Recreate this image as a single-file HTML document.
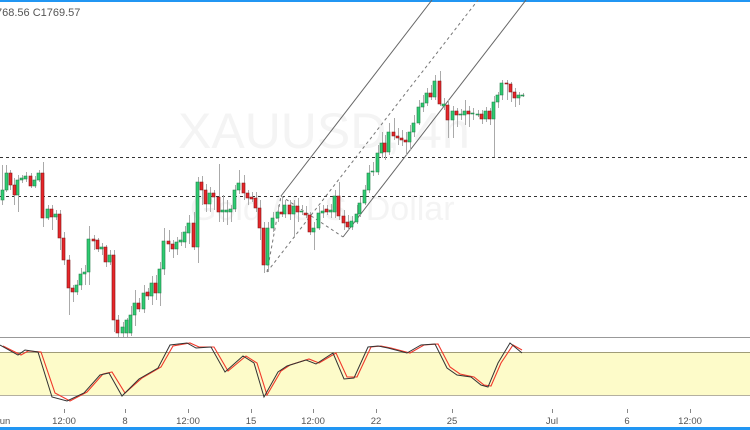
<!DOCTYPE html>
<html><head><meta charset="utf-8"><style>
html,body{margin:0;padding:0;background:#fff;width:750px;height:430px;overflow:hidden;font-family:"Liberation Sans",sans-serif}
</style></head><body>
<svg width="750" height="430" viewBox="0 0 750 430" xmlns="http://www.w3.org/2000/svg" style="position:absolute;left:0;top:0">
<rect x="0" y="0" width="750" height="2" fill="#2196f3"/>
<rect x="0" y="427" width="750" height="3" fill="#2196f3"/>
<text x="-4" y="16" font-size="11" fill="#555" font-family="Liberation Sans,sans-serif">768.56  C1769.57</text>
<text x="178" y="148" font-size="50" fill="#f4f4f4" font-family="Liberation Sans,sans-serif">XAUUSD, 4h</text>
<text x="190" y="220" font-size="34" fill="#f4f4f4" font-family="Liberation Sans,sans-serif">Gold / U.S. Dollar</text>
<g stroke="#333" stroke-width="1" stroke-dasharray="3,3">
<line x1="0" y1="157.5" x2="750" y2="157.5"/>
<line x1="0" y1="196.5" x2="750" y2="196.5"/>
</g>
<g stroke="#666" stroke-width="1" fill="none">
<line x1="281" y1="196" x2="432" y2="0"/>
<line x1="343" y1="237" x2="526" y2="0"/>
</g>
<g stroke="#777" stroke-width="1" stroke-dasharray="3,3" fill="none">
<line x1="267" y1="272" x2="478" y2="0"/>
<line x1="281" y1="196" x2="343" y2="237"/>
<line x1="267" y1="272" x2="281" y2="196"/>
</g>
<path stroke="#aaa" stroke-width="1" fill="none" d="M2.5 165V205M6.5 165V192M10.5 170V190M14.5 178V205M18.5 175V212M22.5 175V183M26.5 172V182M31.5 173V188M35.5 176V188M39.5 170V182M43.5 162V227M48.5 205V220M52.5 205V230M56.5 210V220M60.5 210V250M64.5 232V265M69.5 255V315M73.5 285V302M77.5 280V295M81.5 268V290M85.5 265V285M89.5 226V285M94.5 235V250M98.5 238V252M102.5 243V255M106.5 245V267M110.5 250V265M114.5 250V332M118.5 315V337M123.5 322V337M127.5 318V337M131.5 306V336M135.5 290V326M139.5 298V312M144.5 285V313M148.5 288V300M152.5 276V305M156.5 275V300M160.5 262V306M164.5 228V275M169.5 230V252M173.5 240V258M177.5 237V255M181.5 232V246M185.5 226V248M189.5 215V244M194.5 212V250M198.5 177V263M202.5 176V205M206.5 184V212M210.5 187V212M214.5 190V210M219.5 164V222M223.5 195V222M227.5 200V225M231.5 205V222M235.5 185V212M239.5 170V194M244.5 175V200M248.5 190V205M252.5 192V202M256.5 192V212M260.5 200V240M264.5 222V273M268.5 222V272M273.5 212V232M278.5 205V222M282.5 196V217M285.5 200V218M290.5 200V220M294.5 200V238M298.5 198V222M302.5 205V215M306.5 206V218M310.5 212V235M314.5 222V250M319.5 206V230M323.5 205V218M327.5 205V215M331.5 204V218M335.5 190V218M339.5 182V220M344.5 210V230M348.5 215V230M352.5 216V230M357.5 205V224M360.5 197V217M365.5 185V205M369.5 165V193M373.5 162V176M378.5 145V175M382.5 132V158M385.5 135V160M389.5 123V155M394.5 118V140M398.5 128V145M402.5 130V146M406.5 132V155M410.5 125V150M414.5 115V137M419.5 100V125M423.5 95V112M427.5 88V106M431.5 85V100M435.5 75V100M440.5 71V106M444.5 98V110M448.5 100V138M453.5 106V138M457.5 108V127M461.5 109V120M465.5 100V125M469.5 106V127M473.5 108V120M478.5 110V117M482.5 110V124M486.5 107V122M490.5 108V125M494.5 96V157M498.5 92V108M502.5 80V100M507.5 80V100M511.5 82V102M515.5 88V107M519.5 92V105M523.5 93V97"/>
<path fill="#2ecc71" stroke="#1e7a45" stroke-width="0.6" d="M1 190h3V200h-3ZM5 173h3V190h-3ZM16 180h3V195h-3ZM20 178h3V180h-3ZM24 176h3V179h-3ZM33 180h3V186h-3ZM37 173h3V180h-3ZM46 209h3V218h-3ZM54 214h3V217h-3ZM75 285h3V292h-3ZM79 274h3V285h-3ZM83 272h3V274h-3ZM87 239h3V272h-3ZM100 247h3V249h-3ZM108 255h3V262h-3ZM121 327h3V333h-3ZM125 320h3V333h-3ZM129 315h3V333h-3ZM133 303h3V315h-3ZM142 293h3V309h-3ZM150 283h3V296h-3ZM158 269h3V293h-3ZM162 241h3V269h-3ZM175 242h3V249h-3ZM179 240h3V242h-3ZM183 232h3V242h-3ZM187 223h3V233h-3ZM196 182h3V247h-3ZM208 193h3V204h-3ZM221 210h3V212h-3ZM225 210h3V212h-3ZM229 209h3V212h-3ZM233 190h3V209h-3ZM237 183h3V190h-3ZM266 228h3V265h-3ZM271 218h3V228h-3ZM276 212h3V218h-3ZM283 205h3V214h-3ZM292 206h3V214h-3ZM300 211h3V212h-3ZM312 228h3V232h-3ZM317 213h3V228h-3ZM321 211h3V213h-3ZM329 210h3V212h-3ZM333 196h3V212h-3ZM350 221h3V227h-3ZM355 214h3V222h-3ZM358 203h3V214h-3ZM363 190h3V203h-3ZM367 173h3V190h-3ZM371 171h3V172h-3ZM376 153h3V172h-3ZM380 143h3V153h-3ZM387 132h3V152h-3ZM408 132h3V142h-3ZM412 123h3V132h-3ZM417 107h3V123h-3ZM421 103h3V107h-3ZM425 93h3V103h-3ZM433 81h3V97h-3ZM442 104h3V106h-3ZM451 111h3V120h-3ZM459 114h3V115h-3ZM463 111h3V115h-3ZM471 113h3V114h-3ZM476 114h3V115h-3ZM484 111h3V119h-3ZM492 102h3V119h-3ZM496 95h3V102h-3ZM500 83h3V95h-3ZM517 95h3V98h-3ZM521 95h3V96h-3Z"/>
<path fill="#e8262a" stroke="#7a1515" stroke-width="0.6" d="M9 173h3V185h-3ZM13 185h3V195h-3ZM29 176h3V186h-3ZM41 173h3V218h-3ZM50 209h3V217h-3ZM58 214h3V238h-3ZM62 238h3V260h-3ZM67 260h3V288h-3ZM71 288h3V292h-3ZM92 239h3V241h-3ZM96 240h3V249h-3ZM104 247h3V262h-3ZM112 255h3V320h-3ZM116 320h3V333h-3ZM137 303h3V309h-3ZM146 292h3V296h-3ZM154 283h3V293h-3ZM167 241h3V244h-3ZM171 244h3V249h-3ZM192 223h3V247h-3ZM200 182h3V190h-3ZM204 190h3V204h-3ZM212 193h3V197h-3ZM217 197h3V212h-3ZM242 183h3V193h-3ZM246 193h3V198h-3ZM250 197h3V199h-3ZM254 198h3V208h-3ZM258 208h3V228h-3ZM262 228h3V265h-3ZM280 212h3V214h-3ZM288 205h3V214h-3ZM296 206h3V212h-3ZM304 213h3V215h-3ZM308 215h3V232h-3ZM325 209h3V212h-3ZM337 196h3V216h-3ZM342 216h3V223h-3ZM346 222h3V227h-3ZM383 143h3V152h-3ZM392 132h3V136h-3ZM396 136h3V138h-3ZM400 138h3V140h-3ZM404 140h3V142h-3ZM429 93h3V97h-3ZM438 81h3V104h-3ZM446 105h3V120h-3ZM455 111h3V115h-3ZM467 111h3V114h-3ZM480 114h3V119h-3ZM488 111h3V119h-3ZM505 83h3V84h-3ZM509 84h3V92h-3ZM513 92h3V98h-3Z"/>
<line x1="0" y1="337.5" x2="750" y2="337.5" stroke="#999" stroke-width="1"/>
<rect x="0" y="352" width="750" height="43" fill="#fdfbc9"/>
<line x1="0" y1="352.5" x2="750" y2="352.5" stroke="#a09c78" stroke-width="1"/>
<line x1="0" y1="395.5" x2="750" y2="395.5" stroke="#b4b0a0" stroke-width="1"/>
<polyline fill="none" stroke="#f0392b" stroke-width="1.1" points="3,346 21,355 28,351 41,352 55,393 70,401 87,392 103,374 112,372 125,393 142,378 161,367 173,346 190,343 199,347 214,347 228,371 246,356 257,363 267,395 281,371 290,365 309,359 319,363 336,353 347,377 357,377 371,347 381,346 391,348 410,353 424,345 438,344 450,367 460,374 474,377 484,385 491,386 501,363 513,345 522,350"/>
<polyline fill="none" stroke="#333" stroke-width="1" points="0,345 18,355 25,350 38,352 52,397 67,401 84,393 100,375 109,373 122,396 139,379 158,368 170,345 187,343 196,348 211,347 225,372 243,356 254,363 264,397 278,372 287,366 306,360 316,364 333,353 344,379 354,378 368,347 378,346 388,348 407,353 421,345 435,344 447,368 457,375 471,377 481,385 488,387 498,363 510,343 522,353"/>
<g stroke="#888" stroke-width="1">
<line x1="64.5" y1="409" x2="64.5" y2="413"/><line x1="125.5" y1="409" x2="125.5" y2="413"/><line x1="188.5" y1="409" x2="188.5" y2="413"/><line x1="251.5" y1="409" x2="251.5" y2="413"/><line x1="313.5" y1="409" x2="313.5" y2="413"/><line x1="376.5" y1="409" x2="376.5" y2="413"/><line x1="452.5" y1="409" x2="452.5" y2="413"/><line x1="552.5" y1="409" x2="552.5" y2="413"/><line x1="627.5" y1="409" x2="627.5" y2="413"/><line x1="690.5" y1="409" x2="690.5" y2="413"/>
</g>
<g font-size="9.5" fill="#555" text-anchor="middle" font-family="Liberation Sans,sans-serif">
<text x="5" y="424">un</text><text x="64" y="424">12:00</text><text x="125" y="424">8</text><text x="188" y="424">12:00</text><text x="251" y="424">15</text><text x="313" y="424">12:00</text><text x="376" y="424">22</text><text x="452" y="424">25</text><text x="552" y="424">Jul</text><text x="627" y="424">6</text><text x="690" y="424">12:00</text>
</g>
</svg>
</body></html>
